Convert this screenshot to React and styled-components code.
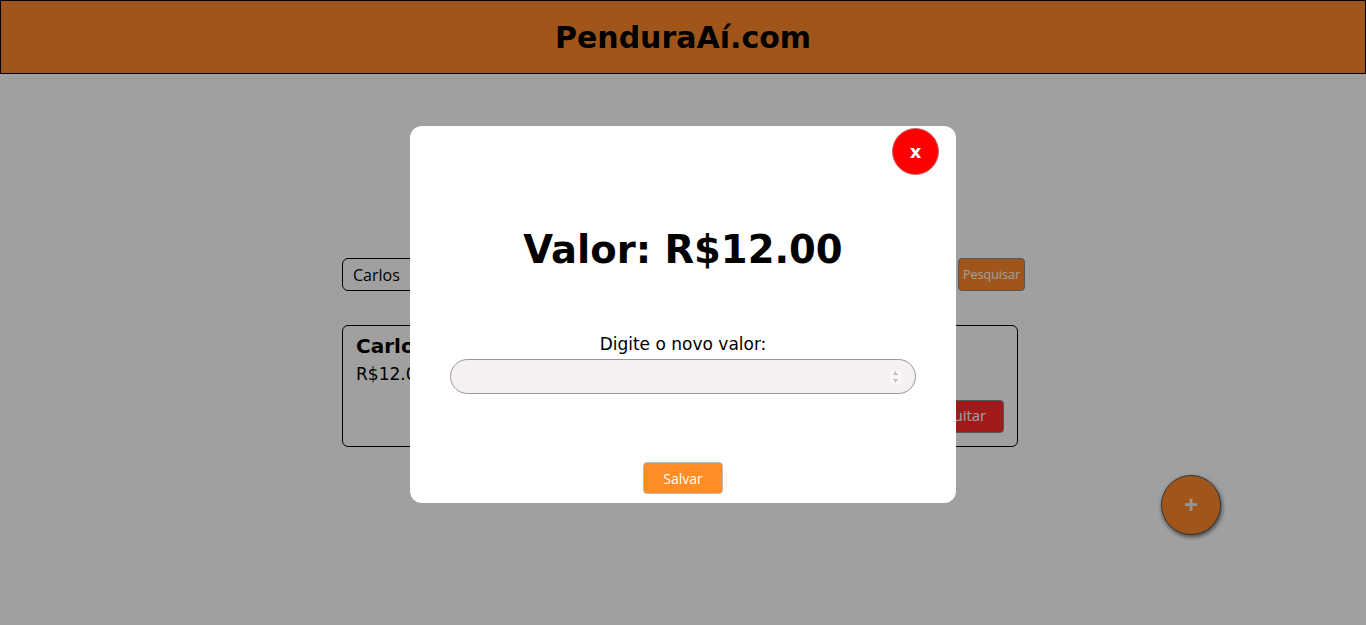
import React, { useState } from "react";
import styled, { createGlobalStyle } from "styled-components";

const GlobalStyle = createGlobalStyle`
  body {
    margin: 0;
    background: #ffffff;
    font-family: "DejaVu Sans", sans-serif;
  }
`;

const Header = styled.header`
  height: 72px;
  border: 1px solid #000;
  background: #ff8a2a;
  display: flex;
  align-items: center;
  justify-content: center;
  h1 {
    margin: 0;
    font-size: 30px;
    font-weight: bold;
    color: #000;
  }
`;

const Main = styled.main`
  width: 676px;
  margin-left: calc(50% - 341px);
  padding-top: 184px;
  display: flex;
  flex-direction: column;
  gap: 34px;
`;

const SearchRow = styled.div`
  display: flex;
  align-items: center;
  gap: 4px;
  margin-right: -7px;
`;

const SearchInput = styled.input`
  flex: 1;
  height: 33px;
  box-sizing: border-box;
  border: 1px solid #000;
  border-radius: 6px;
  padding: 0 10px;
  font-family: "Open Sans", sans-serif;
  font-size: 16px;
  background: #fff;
`;

const SmallButton = styled.button`
  height: 33px;
  padding: 0 4px;
  border: 1px solid #888;
  border-radius: 4px;
  background: ${(p) => p.bg};
  color: #fff;
  font-family: "Open Sans", sans-serif;
  font-size: ${(p) => p.size || 12}px;
`;

const Card = styled.div`
  height: 122px;
  box-sizing: border-box;
  border: 1px solid #000;
  border-radius: 6px;
  padding: 8px 13px;
  display: flex;
  justify-content: space-between;
  h2 {
    margin: 0;
    font-size: 20px;
  }
  p {
    margin: 6px 0 0;
    font-size: 17px;
  }
`;

const CardActions = styled.div`
  display: flex;
  align-items: flex-end;
  padding-bottom: 5px;
`;

const QuitButton = styled(SmallButton)`
  width: 80px;
  height: 33px;
  padding-bottom: 3px;
`;

const Fab = styled.button`
  position: fixed;
  right: 145px;
  bottom: 90px;
  width: 60px;
  height: 60px;
  border-radius: 50%;
  border: 1px solid #555;
  background: #ff8a2a;
  color: #eee;
  font-size: 24px;
  font-weight: bold;
  box-shadow: 1px 2px 4px rgba(0, 0, 0, 0.6);
`;

const Overlay = styled.div`
  position: fixed;
  inset: 0;
  background: rgba(0, 0, 0, 0.373);
  display: flex;
  align-items: center;
  justify-content: center;
  padding-top: 4px;
`;

const Modal = styled.div`
  width: 546px;
  height: 377px;
  box-sizing: border-box;
  background: #fff;
  border-radius: 12px;
  padding: 2px 17px 9px 40px;
  display: flex;
  flex-direction: column;
  align-items: center;
`;

const CloseButton = styled.button`
  align-self: flex-end;
  width: 47px;
  height: 47px;
  border-radius: 50%;
  border: 1px solid #c66;
  background: #ff0000;
  color: #fff;
  font-family: "DejaVu Sans", sans-serif;
  font-weight: bold;
  font-size: 18px;
  padding: 0;
`;

const Title = styled.h2`
  margin: 52px 23px 0 0;
  font-size: 38.5px;
  font-weight: bold;
`;

const Label = styled.label`
  margin: 62px 23px 0 0;
  font-size: 17px;
`;

const ValueInput = styled.input`
  margin: 5px 23px 0 0;
  width: 466px;
  height: 35px;
  box-sizing: border-box;
  border: 1px solid #999;
  border-radius: 18px;
  background: #f5f1f0;
  padding: 0 12px;
  font-size: 16px;
  &::-webkit-inner-spin-button {
    opacity: 0.5;
    transform: scale(0.8);
  }
`;

const SaveButton = styled(SmallButton)`
  margin: auto 23px 0 0;
  width: 80px;
  height: 32px;
  background: #ff8c24;
  border-color: #bbb;
`;

export default function App() {
  const [valor, setValor] = useState("");
  return (
    <>
      <GlobalStyle />
      <Header>
        <h1>PenduraAí.com</h1>
      </Header>
      <Main>
        <SearchRow>
          <SearchInput defaultValue="Carlos" />
          <SmallButton bg="#ff8a2a" size={12.5}>
            Pesquisar
          </SmallButton>
        </SearchRow>
        <Card>
          <div>
            <h2>Carlos</h2>
            <p>R$12.00</p>
          </div>
          <CardActions>
            <QuitButton bg="#ff2a2a" size={15}>
              Quitar
            </QuitButton>
          </CardActions>
        </Card>
      </Main>
      <Fab>+</Fab>
      <Overlay>
        <Modal>
          <CloseButton>x</CloseButton>
          <Title>Valor: R$12.00</Title>
          <Label htmlFor="valor">Digite o novo valor:</Label>
          <ValueInput
            id="valor"
            type="number"
            value={valor}
            onChange={(e) => setValor(e.target.value)}
          />
          <SaveButton size={14}>Salvar</SaveButton>
        </Modal>
      </Overlay>
    </>
  );
}
